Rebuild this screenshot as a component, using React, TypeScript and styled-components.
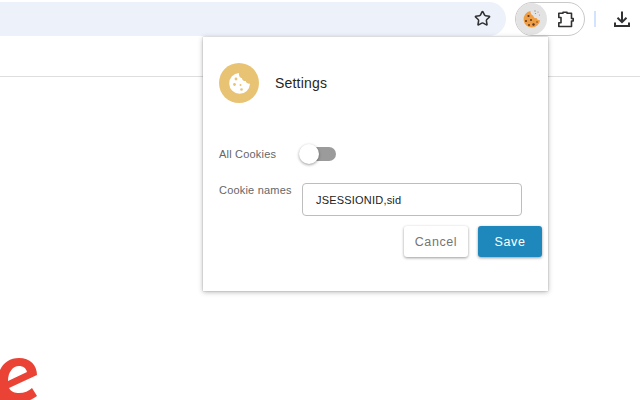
import styled, { createGlobalStyle } from "styled-components";
import { Star } from "lucide-react";

const GlobalStyle = createGlobalStyle`
  html, body {
    margin: 0;
    padding: 0;
    background: #ffffff;
    font-family: "Liberation Sans", Arial, sans-serif;
  }
`;

const Page = styled.div`
  position: relative;
  width: 640px;
  height: 400px;
  overflow: hidden;
  background: #ffffff;
`;

const Toolbar = styled.div`
  display: flex;
  align-items: center;
  height: 34px;
  padding-top: 2px;
`;

const AddressBar = styled.div`
  display: flex;
  align-items: center;
  justify-content: flex-end;
  width: 506px;
  height: 34px;
  padding: 0 15px 1px 0;
  box-sizing: border-box;
  background: #edf1f9;
  border-radius: 0 17px 17px 0;
  color: #2f3133;
`;

const ExtensionPill = styled.div`
  display: flex;
  align-items: center;
  width: 70px;
  height: 34px;
  margin-left: 9px;
  box-sizing: border-box;
  border: 1px solid #c9c9c9;
  border-radius: 17px;
`;

const CookieButton = styled.div`
  display: flex;
  align-items: center;
  justify-content: center;
  width: 33px;
  height: 32px;
  border-radius: 50%;
  background: #e3e3e3;
`;

const PuzzleButton = styled.div`
  display: flex;
  align-items: center;
  justify-content: center;
  width: 39px;
  height: 32px;
`;

const Separator = styled.div`
  width: 2px;
  height: 16px;
  margin-left: 9px;
  background: #d3e3fd;
`;

const DownloadButton = styled.div`
  display: flex;
  margin-left: 16px;
`;

const BookmarkBar = styled.div`
  height: 40px;
  border-bottom: 1px solid #dedede;
`;

const Popup = styled.div`
  position: absolute;
  left: 203px;
  top: 37px;
  width: 345px;
  height: 254px;
  box-sizing: border-box;
  padding: 26px 6px 0 16px;
  background: #ffffff;
  box-shadow: 0 0 1px rgba(0, 0, 0, 0.3), 0 1px 5px rgba(0, 0, 0, 0.3);
`;

const Header = styled.div`
  display: flex;
  align-items: center;
  gap: 16px;
`;

const Avatar = styled.div`
  display: flex;
  align-items: center;
  justify-content: center;
  width: 40px;
  height: 40px;
  border-radius: 50%;
  background: #e8c374;
`;

const Title = styled.div`
  font-size: 14px;
  letter-spacing: 0.2px;
  color: #262626;
`;

const Row = styled.div<{ $top: number; $align: string }>`
  display: flex;
  align-items: ${(p) => p.$align};
  margin-top: ${(p) => p.$top}px;
`;

const Label = styled.div<{ $drop?: number }>`
  width: 83px;
  padding-top: ${(p) => p.$drop ?? 0}px;
  font-size: 11px;
  line-height: 13px;
  letter-spacing: 0.2px;
  color: #666666;
`;

const Switch = styled.div`
  position: relative;
  width: 27px;
  height: 14px;
  margin-left: 7px;
  border-radius: 7px;
  background: #9b9b9b;
`;

const Knob = styled.div`
  position: absolute;
  left: -10px;
  top: -3px;
  width: 20px;
  height: 20px;
  border-radius: 50%;
  background: #ffffff;
  box-shadow: 0 1px 3px rgba(0, 0, 0, 0.4);
`;

const NameInput = styled.div`
  display: flex;
  align-items: center;
  width: 220px;
  height: 33px;
  box-sizing: border-box;
  padding-left: 13px;
  border: 1px solid #bdbdbd;
  border-radius: 4px;
  font-size: 11px;
  letter-spacing: 0.2px;
  color: #222222;
`;

const Actions = styled.div`
  display: flex;
  justify-content: flex-end;
  gap: 10px;
  margin-top: 10px;
`;

const Button = styled.div<{ $primary?: boolean }>`
  display: flex;
  align-items: center;
  justify-content: center;
  width: 64px;
  height: 31px;
  border-radius: 3px;
  font-size: 12.5px;
  letter-spacing: 0.6px;
  color: ${(p) => (p.$primary ? "#ffffff" : "#757575")};
  background: ${(p) => (p.$primary ? "#1e88bd" : "#ffffff")};
  box-shadow: 0 1px 3px rgba(0, 0, 0, 0.4);
`;

const BrandMark = styled.svg`
  position: absolute;
  left: 0;
  bottom: 0;
`;

const CookieIcon = () => (
  <svg width="24" height="24" viewBox="0 0 24 24">
    <path
      d="M10.500 4a8.300 8.300 0 1 0 9.600 9.200c-1.800.2-3-.6-3.500-2.200-1.800.3-3.200-.7-3.500-2.600-1.600-.2-2.800-2-2.600-4.400z"
      fill="#ee9f45"
    />
    <g fill="#5c3420">
      <circle cx="8.500" cy="9" r="1.100" />
      <circle cx="6" cy="14" r="1" />
      <circle cx="11" cy="13" r="1" />
      <circle cx="13.500" cy="17.500" r="1.200" />
      <circle cx="9" cy="18" r="0.900" />
      <circle cx="17" cy="15" r="0.700" />
    </g>
    <g fill="#9a8a80">
      <circle cx="15" cy="4" r="0.700" />
      <circle cx="18" cy="5" r="0.600" />
      <circle cx="15.500" cy="6.500" r="0.600" />
      <circle cx="19.500" cy="8" r="0.500" />
    </g>
  </svg>
);

const PuzzleIcon = () => (
  <svg width="18" height="18" viewBox="0 0 18 18" fill="none">
    <path
      d="M1.800 3.200H6V2.200h4v1h4.500v5.300h1.700v2.500h-1.700v5.500H1.800v-3.800h2.200V7.500H1.800z"
      stroke="#2f3133"
      strokeWidth="1.600"
      strokeLinejoin="round"
    />
  </svg>
);

const DownloadIcon = () => (
  <svg width="20" height="20" viewBox="0 0 20 20" fill="none" stroke="#2f3133" strokeWidth="2">
    <path d="M10 2.500v10.500M5.500 8.800 10 13.200l4.500-4.400" />
    <path d="M3 13.500v3.500h14v-3.500" />
  </svg>
);

const AvatarCookie = () => (
  <svg width="24" height="24" viewBox="0 0 24 24">
    <path
      d="M12 2a10.400 10.400 0 1 0 11 10.800c-2.200.2-3.800-.7-4.300-2.700-2.100.2-3.700-1-3.800-3.100-2.100 0-3.200-2.400-2.900-5z"
      fill="#ffffff"
    />
    <g fill="#e8c374">
      <circle cx="9" cy="8" r="1.400" />
      <circle cx="7.500" cy="13.500" r="1.400" />
      <circle cx="13.500" cy="14" r="1" />
      <circle cx="14.500" cy="18.500" r="1.300" />
    </g>
  </svg>
);

export default function App() {
  return (
    <Page>
      <GlobalStyle />
      <Toolbar>
        <AddressBar>
          <Star size={17} strokeWidth={2.2} />
        </AddressBar>
        <ExtensionPill>
          <CookieButton>
            <CookieIcon />
          </CookieButton>
          <PuzzleButton>
            <PuzzleIcon />
          </PuzzleButton>
        </ExtensionPill>
        <Separator />
        <DownloadButton>
          <DownloadIcon />
        </DownloadButton>
      </Toolbar>
      <BookmarkBar />
      <BrandMark width="40" height="42" viewBox="0 18 40 42">
        <path
          fillRule="evenodd"
          d="M-2 40C-2 27 7 18 19 18c11 0 18 7 18 17L9 48c2 4 6 5 10 5 5 0 10-2 13-5l5 8c-4 3-9 6-17 6H0zM8 41l19-9c-1-4-4-6-8-6-6 0-11 6-11 15z"
          fill="#ea4335"
        />
      </BrandMark>
      <Popup>
        <Header>
          <Avatar>
            <AvatarCookie />
          </Avatar>
          <Title>Settings</Title>
        </Header>
        <Row $top={44} $align="center">
          <Label>All Cookies</Label>
          <Switch>
            <Knob />
          </Switch>
        </Row>
        <Row $top={22} $align="flex-start">
          <Label $drop={1}>Cookie names</Label>
          <NameInput>JSESSIONID,sid</NameInput>
        </Row>
        <Actions>
          <Button>Cancel</Button>
          <Button $primary>Save</Button>
        </Actions>
      </Popup>
    </Page>
  );
}
